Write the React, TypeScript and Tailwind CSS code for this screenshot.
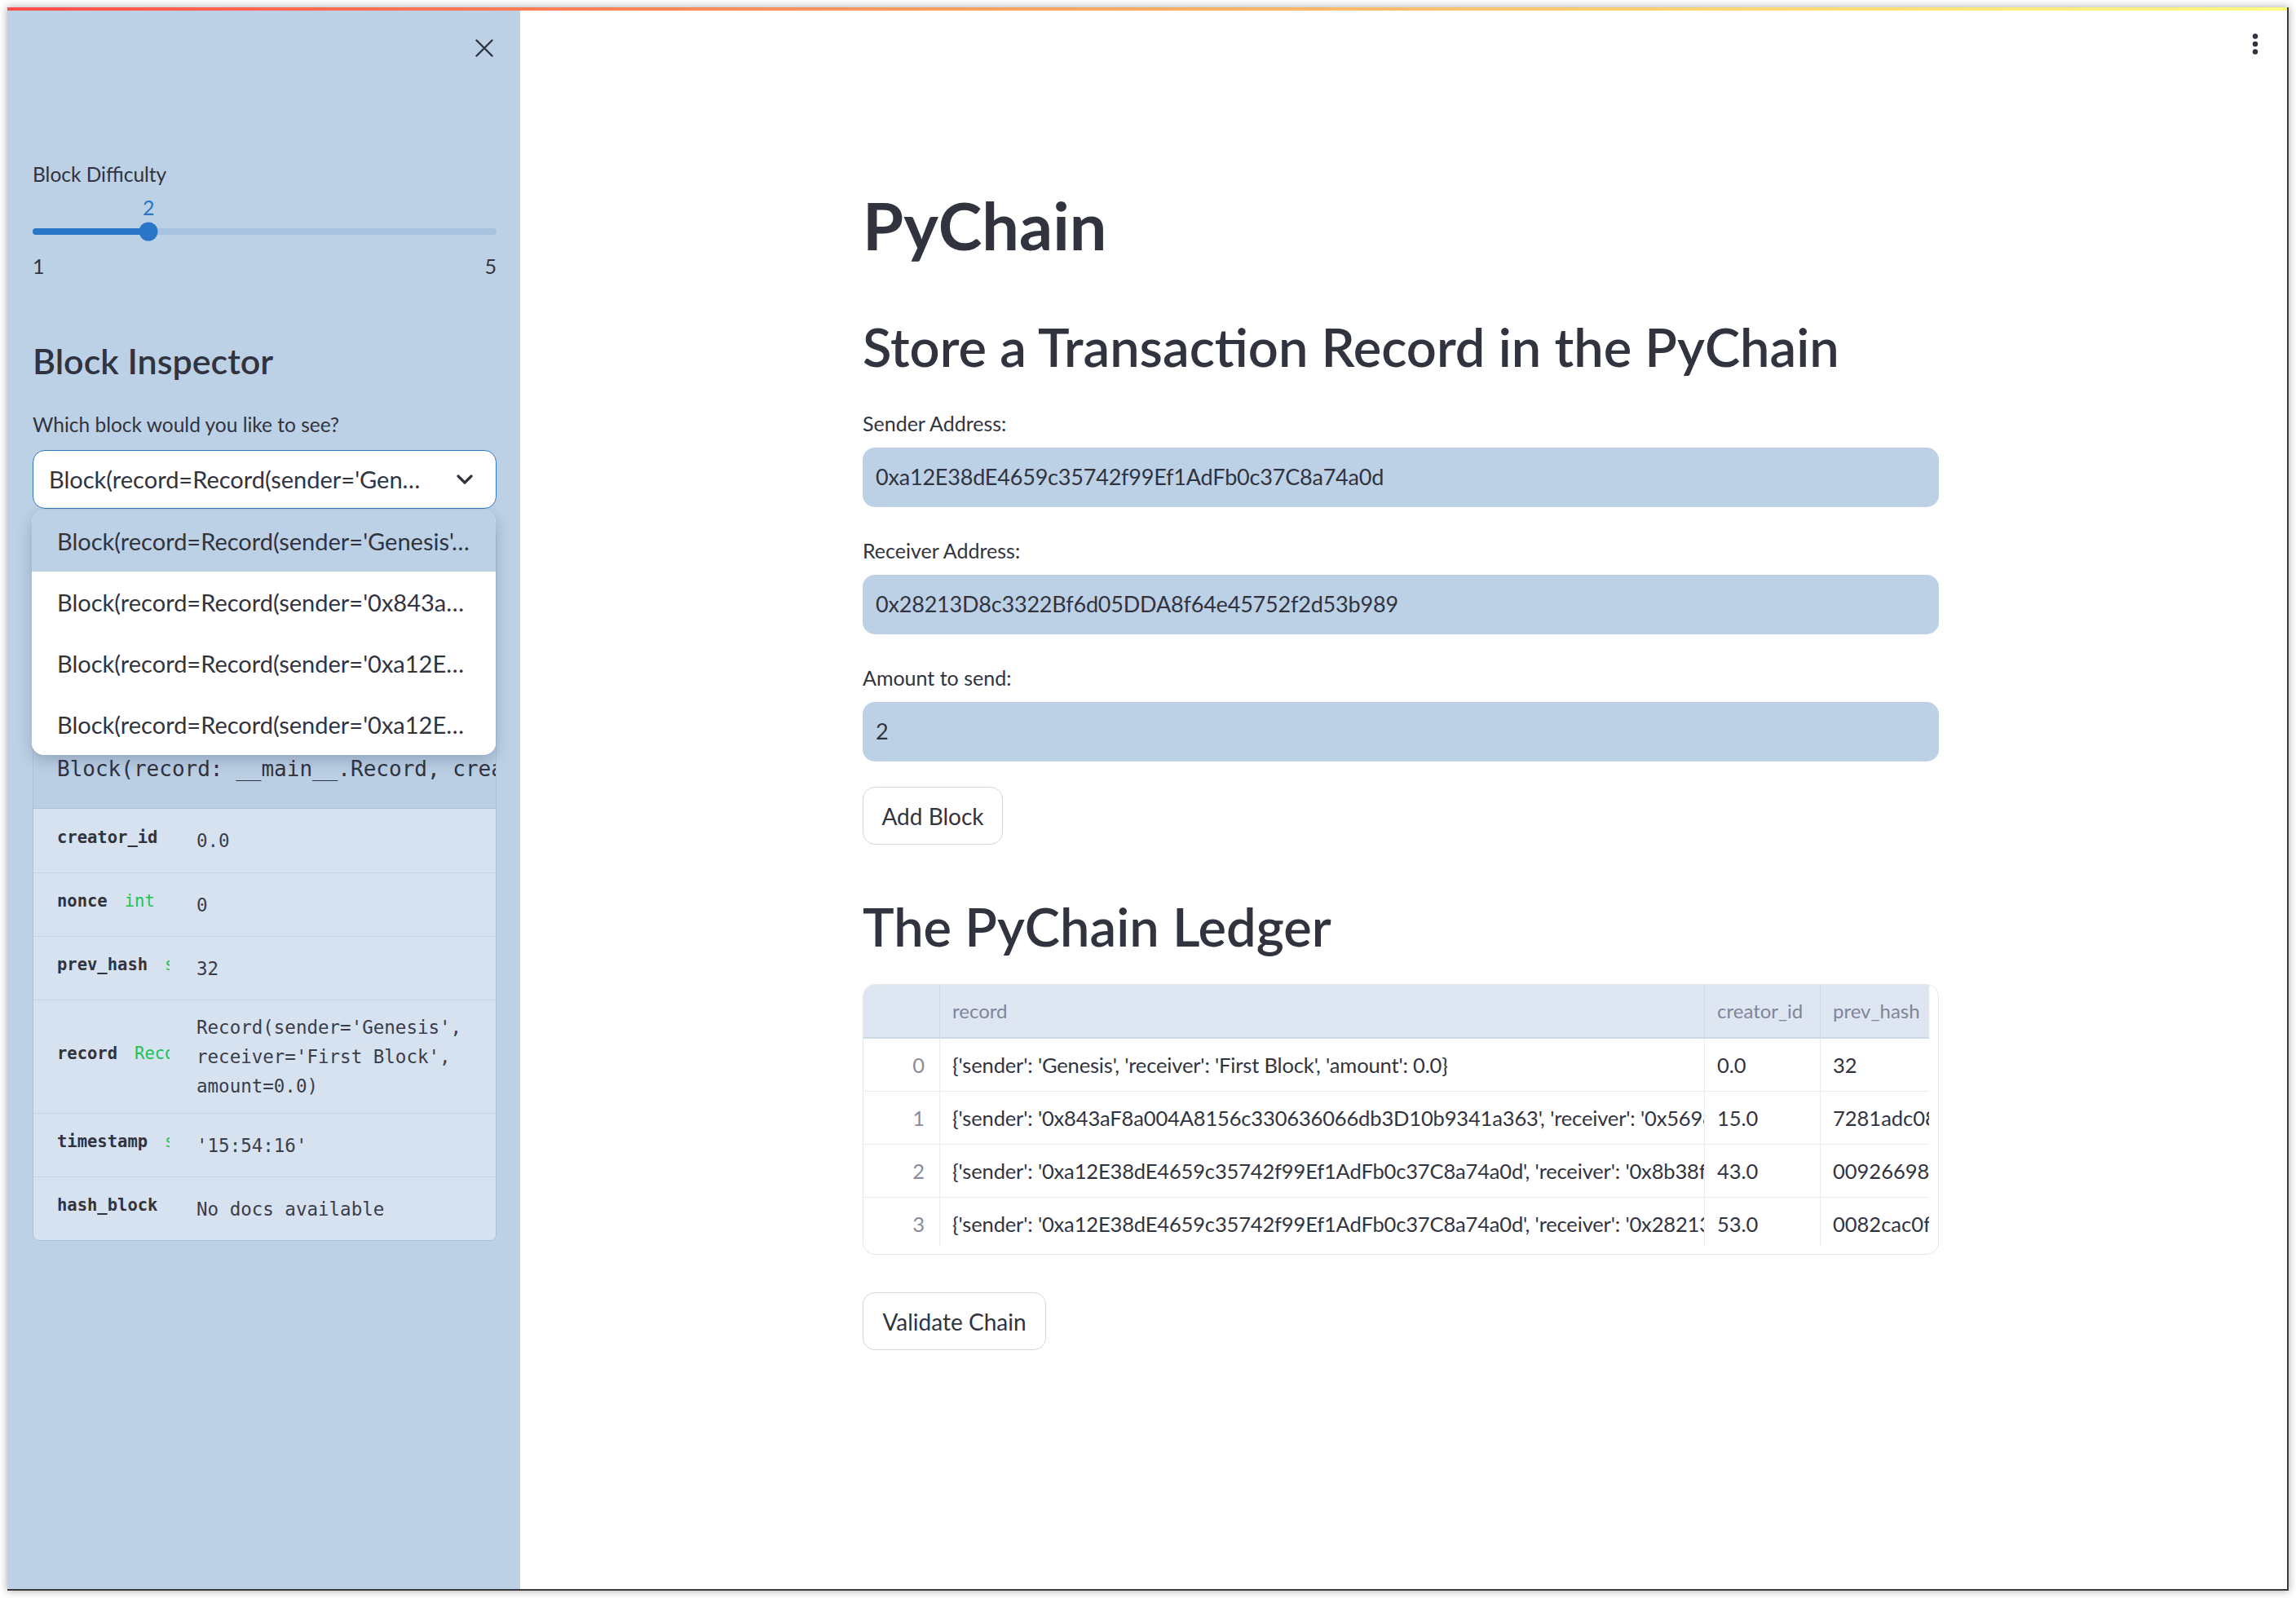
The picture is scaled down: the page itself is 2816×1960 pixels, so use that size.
import React from "react";

const options = [
  "Block(record=Record(sender='Genesis'…",
  "Block(record=Record(sender='0x843a…",
  "Block(record=Record(sender='0xa12E…",
  "Block(record=Record(sender='0xa12E…",
];

const helpRows = [
  { key: "creator_id", type: "float", value: ["0.0"] },
  { key: "nonce", type: "int", value: ["0"] },
  { key: "prev_hash", type: "str", value: ["32"] },
  {
    key: "record",
    type: "Record",
    value: ["Record(sender='Genesis',", "receiver='First Block',", "amount=0.0)"],
  },
  { key: "timestamp", type: "str", value: ["'15:54:16'"] },
  { key: "hash_block", type: "method", value: ["No docs available"] },
];

const ledger = [
  {
    record: "{'sender': 'Genesis', 'receiver': 'First Block', 'amount': 0.0}",
    creator: "0.0",
    prev: "32",
  },
  {
    record:
      "{'sender': '0x843aF8a004A8156c330636066db3D10b9341a363', 'receiver': '0x56983a2B67F6b6f5c7a1F1e9d8b7c3a5e2f4d10', 'amount': 15.0}",
    creator: "15.0",
    prev: "7281adc08e1f",
  },
  {
    record:
      "{'sender': '0xa12E38dE4659c35742f99Ef1AdFb0c37C8a74a0d', 'receiver': '0x8b38f19B4a7d2c5e6f9a1b3c7d8e2f4a5b6c9d0e', 'amount': 43.0}",
    creator: "43.0",
    prev: "00926698a3c1",
  },
  {
    record:
      "{'sender': '0xa12E38dE4659c35742f99Ef1AdFb0c37C8a74a0d', 'receiver': '0x28213D8c3322Bf6d05DDA8f64e45752f2d53b989', 'amount': 2.0}",
    creator: "53.0",
    prev: "0082cac0fb7d",
  },
];

function Sidebar() {
  return (
    <aside className="w-[629px] shrink-0 bg-[#bdd1e6] pl-[31px] pr-[29px]">
      {/* close */}
      <div className="flex h-[87px] justify-end pt-[35px] pr-[4px]">
        <svg width="22" height="22" viewBox="0 0 22 22">
          <path d="M1.5 1.5 20.5 20.5M20.5 1.5 1.5 20.5" stroke="#31333f" strokeWidth="2.4" strokeLinecap="round" />
        </svg>
      </div>

      {/* slider */}
      <div className="mt-[94px] flex h-[40px] items-center text-[24.5px]">Block Difficulty</div>
      <div className="relative mt-[4px] h-[34px]">
        <span className="absolute left-[25%] top-0 -translate-x-1/2 text-[25px] leading-[32px] text-[#2a76c6]">2</span>
      </div>
      <div className="relative flex h-[24px] items-center">
        <div className="h-[8px] w-full rounded-full bg-[#a8c3df]">
          <div className="h-full w-[25%] rounded-full bg-[#2a76c6]" />
        </div>
        <div className="absolute left-[25%] top-1/2 h-[23px] w-[23px] -translate-x-1/2 -translate-y-1/2 rounded-full bg-[#2a76c6]" />
      </div>
      <div className="mt-[15px] flex h-[32px] items-center justify-between text-[25px]">
        <span>1</span>
        <span>5</span>
      </div>

      {/* inspector */}
      <div className="mt-[70px] flex h-[60px] items-center text-[43px] font-semibold">Block Inspector</div>
      <div className="mt-[28px] flex h-[40px] items-center text-[24.5px]">Which block would you like to see?</div>

      <div className="relative mt-[11px] h-[72px]">
        <div className="flex h-full items-center justify-between rounded-[15px] border border-[#2f78c4] bg-white pl-[19px] pr-[28px] text-[29px]">
          <span className="whitespace-nowrap">Block(record=Record(sender='Gen…</span>
          <svg width="20" height="12" viewBox="0 0 20 12">
            <path d="M2 2 10 10 18 2" fill="none" stroke="#31333f" strokeWidth="3.2" strokeLinecap="round" strokeLinejoin="round" />
          </svg>
        </div>

        {/* open menu */}
        <div className="absolute left-[-1px] top-[74px] z-10 w-[569px] overflow-hidden rounded-[15px] bg-white shadow-[0_6px_18px_rgba(40,60,90,0.28)]">
          {options.map((o, i) => (
            <div
              key={i}
              className={
                i === 0
                  ? "flex h-[75px] items-center bg-[#bdd1e6] pl-[31px] text-[29px] whitespace-nowrap"
                  : "flex h-[75px] items-center bg-white pl-[31px] text-[29px] whitespace-nowrap"
              }
            >
              {o}
            </div>
          ))}
        </div>
      </div>

      {/* help panel */}
      <div className="mt-[30px] overflow-hidden rounded-b-[8px] border border-[#adc2da] font-['DejaVu_Sans_Mono',monospace]">
        <div className="flex h-[336px] flex-col justify-end bg-[#bacee4] pb-[28px] pl-[29px]">
          <div className="flex h-[40px] items-center whitespace-nowrap text-[26px] text-[#31333f]">
            Block(record: __main__.Record, creator_id: float, prev_hash: str)
          </div>
        </div>
        <div className="border-t border-[#aabfd7] bg-[#d6e2f0]">
          {helpRows.map((r, i) => (
            <div
              key={r.key}
              className={
                i === 0
                  ? "flex items-center h-[78px]"
                  : r.key === "record"
                  ? "flex items-center h-[139px] border-t border-dotted border-[#b9c8da]"
                  : "flex items-center h-[78px] border-t border-dotted border-[#b9c8da]"
              }
            >
              <div className="flex w-[167px] shrink-0 overflow-hidden whitespace-nowrap pb-[8px] pl-[29px] text-[20.5px]">
                <span className="font-bold text-[#31333f]">{r.key}</span>
                <span className="ml-[21px] text-[#21c354]">{r.type}</span>
              </div>
              <div className="pl-[33px] text-[22.5px] leading-[36px] text-[#3b3d4a]">
                {r.value.map((v) => (
                  <div key={v} className="whitespace-nowrap">
                    {v}
                  </div>
                ))}
              </div>
            </div>
          ))}
        </div>
      </div>
    </aside>
  );
}

function Field({ label, value }: { label: string; value: string }) {
  return (
    <>
      <div className="mt-[34px] flex h-[40px] items-center text-[25px]">{label}</div>
      <div className="mt-[9px] flex h-[73px] items-center rounded-[15px] bg-[#bdd1e6] pl-[16px] text-[27px] tracking-[-0.2px]">
        {value}
      </div>
    </>
  );
}

function Ledger() {
  return (
    <div className="mt-[30px] h-[332px] w-[1320px] overflow-hidden rounded-[15px] border border-[#e4e6ea]">
      <div className="h-[320px] w-[1307px] overflow-hidden text-[25.5px]">
        <div className="flex h-[66px] border-b-2 border-[#cfd9e4] bg-[#dee7f1] text-[24px] text-[#80849a]">
          <div className="w-[94px] shrink-0 border-r border-[#cdd6e1]" />
          <div className="flex w-[938px] shrink-0 items-center border-r border-[#cdd6e1] pl-[15px]">record</div>
          <div className="flex w-[142px] shrink-0 items-center border-r border-[#cdd6e1] pl-[15px]">creator_id</div>
          <div className="flex w-[133px] shrink-0 items-center overflow-hidden whitespace-nowrap pl-[15px]">prev_hash</div>
        </div>
        {ledger.map((row, i) => (
          <div key={i} className="flex h-[65px] border-b border-[#ebecef]">
            <div className="flex w-[94px] shrink-0 items-center justify-end border-r border-[#ebecef] pr-[18px] text-[#8a8d9b]">{i}</div>
            <div className="flex w-[938px] shrink-0 items-center overflow-hidden whitespace-nowrap border-r border-[#ebecef] pl-[15px] tracking-[-0.15px]">
              {row.record}
            </div>
            <div className="flex w-[142px] shrink-0 items-center border-r border-[#ebecef] pl-[15px]">{row.creator}</div>
            <div className="flex w-[133px] shrink-0 items-center overflow-hidden whitespace-nowrap pl-[15px]">{row.prev}</div>
          </div>
        ))}
      </div>
    </div>
  );
}

function Main() {
  return (
    <main className="relative flex-1 bg-white">
      <div className="absolute right-[35px] top-[28px]">
        <svg width="8" height="26" viewBox="0 0 8 26">
          <circle cx="4" cy="3.5" r="3.2" fill="#31333f" />
          <circle cx="4" cy="13" r="3.2" fill="#31333f" />
          <circle cx="4" cy="22.5" r="3.2" fill="#31333f" />
        </svg>
      </div>

      <div className="ml-[420px] w-[1320px] pt-[213px]">
        <h1 className="flex h-[100px] items-center text-[81px] font-bold">PyChain</h1>
        <h2 className="mt-[60px] flex h-[80px] items-center text-[65px] font-semibold">
          Store a Transaction Record in the PyChain
        </h2>

        <Field label="Sender Address:" value="0xa12E38dE4659c35742f99Ef1AdFb0c37C8a74a0d" />
        <Field label="Receiver Address:" value="0x28213D8c3322Bf6d05DDA8f64e45752f2d53b989" />
        <Field label="Amount to send:" value="2" />

        <button className="mt-[31px] flex h-[71px] w-[172px] items-center justify-center rounded-[15px] border border-[#d5d6da] bg-white text-[28px]">
          Add Block
        </button>

        <h2 className="mt-[61px] flex h-[80px] items-center text-[65px] font-semibold">The PyChain Ledger</h2>
        <Ledger />

        <button className="mt-[46px] flex h-[71px] w-[225px] items-center justify-center rounded-[15px] border border-[#d5d6da] bg-white text-[28px]">
          Validate Chain
        </button>
      </div>
    </main>
  );
}

export default function App() {
  return (
    <div className="h-[1960px] w-[2816px] bg-white p-[9px] font-['Lato',sans-serif] text-[#31333f]">
      <div className="flex h-full w-full flex-col overflow-hidden border-b-2 border-r-2 border-[#3b3b3b] bg-white shadow-[0_0_10px_rgba(0,0,0,0.35)]">
        <div className="h-[4px] w-full shrink-0 bg-linear-to-r from-[#ff4b4b] to-[#fffd80]" />
        <div className="flex min-h-0 flex-1">
          <Sidebar />
          <Main />
        </div>
      </div>
    </div>
  );
}
